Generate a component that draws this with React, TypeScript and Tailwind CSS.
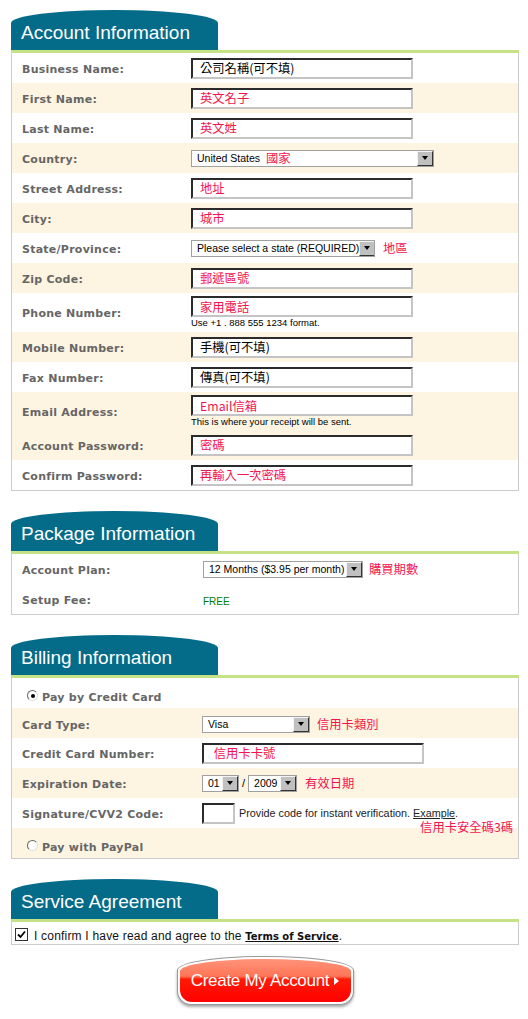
import React from 'react';

const RED = 'text-[#f5134f]';

function Section({ title, children, last }: { title: string; children: React.ReactNode; last?: boolean }) {
  return (
    <section className={last ? 'mb-[11px]' : 'mb-[20px]'}>
      <div className="w-[207px] h-[40px] bg-[#046b89] rounded-t-[50%_13px] pl-[10px] pt-[13px] text-white text-[19px] leading-[19px] font-['Liberation_Sans',Arial,sans-serif]">
        {title}
      </div>
      <div className="h-[3px] bg-[#c5e386]" />
      <div className="border-x border-b border-[#cccccc]">{children}</div>
    </section>
  );
}

function Row({
  label,
  cream,
  labelW = 'w-[179px]',
  children,
  className = '',
}: {
  label: React.ReactNode;
  cream?: boolean;
  labelW?: string;
  children?: React.ReactNode;
  className?: string;
}) {
  return (
    <div className={`flex items-center min-h-[30px] ${cream ? 'bg-[#fdf5e2]' : 'bg-white'} ${className}`}>
      <div className={`${labelW} shrink-0 pl-[10px] pt-[4px] text-[11px] font-bold tracking-[0.25px] text-[#666666] font-['DejaVu_Sans',Verdana,sans-serif]`}>
        {label}
      </div>
      <div className="flex-1 flex items-center">{children}</div>
    </div>
  );
}

function Field({ value, black, w = 'w-[222px]' }: { value: string; black?: boolean; w?: string }) {
  return (
    <input
      readOnly
      value={value}
      className={`block ${w} h-[21px] border-2 border-t-[#2b2b2b] border-l-[#2b2b2b] border-r-[#c4c4c4] border-b-[#c4c4c4] bg-white pl-[7px] text-[12.3px] outline-none font-['Noto_Sans_CJK_TC',sans-serif] ${black ? 'text-black' : RED}`}
    />
  );
}

function Select({ w, text, children }: { w: string; text: string; children?: React.ReactNode }) {
  return (
    <div className={`${w} h-[17px] border border-[#a0a0a0] bg-white flex items-center overflow-hidden`}>
      <span className="pl-[5px] text-[10.5px] leading-[15px] text-black whitespace-nowrap font-['Liberation_Sans',Arial,sans-serif]">
        {text}
      </span>
      {children}
      <span className="ml-auto shrink-0 w-[16px] h-[15px] border border-t-[#f4f4f4] border-l-[#f4f4f4] border-r-[#333333] border-b-[#333333] bg-[#c0c0c0] flex items-center justify-center">
        <span className="w-0 h-0 border-x-[3px] border-x-transparent border-t-[4px] border-t-black" />
      </span>
    </div>
  );
}

function Note({ children, className = '' }: { children: React.ReactNode; className?: string }) {
  return (
    <span className={`text-[12.3px] leading-[15px] whitespace-nowrap font-['Noto_Sans_CJK_TC',sans-serif] ${RED} ${className}`}>
      {children}
    </span>
  );
}

function Radio({ checked }: { checked?: boolean }) {
  return (
    <span className="mb-[6px] w-[11px] h-[11px] rounded-full border border-t-[#666666] border-l-[#666666] border-r-[#e0e0e0] border-b-[#e0e0e0] bg-white flex items-center justify-center shrink-0">
      {checked && <span className="w-[4px] h-[4px] rounded-full bg-black" />}
    </span>
  );
}

function RadioRow({ label, checked, cream }: { label: string; checked?: boolean; cream?: boolean }) {
  return (
    <div className={`flex items-center h-[30px] pl-[15px] pt-[11px] ${cream ? 'bg-[#fdf5e2]' : 'bg-white'}`}>
      <Radio checked={checked} />
      <span className="ml-[4px] text-[11px] font-bold tracking-[0.25px] text-[#666666] font-['DejaVu_Sans',Verdana,sans-serif]">
        {label}
      </span>
    </div>
  );
}

export default function App() {
  return (
    <div className="w-[528px] bg-white pt-[10px] pl-[11px] pr-[9px] pb-[13px]">
      <Section title="Account Information">
        <Row label="Business Name:">
          <Field value="公司名稱(可不填)" black />
        </Row>
        <Row label="First Name:" cream>
          <Field value="英文名子" />
        </Row>
        <Row label="Last Name:">
          <Field value="英文姓" />
        </Row>
        <Row label="Country:" cream>
          <Select w="w-[243px]" text="United States">
            <Note className="ml-[6px]">國家</Note>
          </Select>
        </Row>
        <Row label="Street Address:">
          <Field value="地址" />
        </Row>
        <Row label="City:" cream>
          <Field value="城市" />
        </Row>
        <Row label="State/Province:">
          <Select w="w-[184px]" text="Please select a state (REQUIRED)" />
          <Note className="ml-[8px]">地區</Note>
        </Row>
        <Row label="Zip Code:" cream>
          <Field value="郵遞區號" />
        </Row>
        <Row label="Phone Number:">
          <div className="pt-[3px] pb-[4px]">
            <Field value="家用電話" />
            <div className="text-[9.5px] leading-[11px] text-black font-['Liberation_Sans',Arial,sans-serif]">
              Use +1 . 888 555 1234 format.
            </div>
          </div>
        </Row>
        <Row label="Mobile Number:" cream>
          <Field value="手機(可不填)" black />
        </Row>
        <Row label="Fax Number:">
          <Field value="傳真(可不填)" black />
        </Row>
        <Row label="Email Address:" cream>
          <div className="pt-[3px] pb-[3px]">
            <Field value="Email信箱" />
            <div className="text-[9.5px] leading-[11px] text-black font-['Liberation_Sans',Arial,sans-serif]">
              This is where your receipt will be sent.
            </div>
          </div>
        </Row>
        <Row label="Account Password:" cream>
          <Field value="密碼" />
        </Row>
        <Row label="Confirm Password:">
          <Field value="再輸入一次密碼" />
        </Row>
      </Section>

      <Section title="Package Information">
        <Row label="Account Plan:" labelW="w-[191px]">
          <Select w="w-[160px]" text="12 Months ($3.95 per month)" />
          <Note className="ml-[6px]">購買期數</Note>
        </Row>
        <Row label="Setup Fee:" labelW="w-[191px]">
          <span className="pt-[4px] text-[10px] text-[#008000] font-['Liberation_Sans',Arial,sans-serif]">FREE</span>
        </Row>
      </Section>

      <Section title="Billing Information">
        <RadioRow label="Pay by Credit Card" checked />
        <Row label="Card Type:" cream labelW="w-[190px]" className="pt-[2px]">
          <Select w="w-[108px]" text="Visa" />
          <Note className="ml-[7px]">信用卡類別</Note>
        </Row>
        <Row label="Credit Card Number:" labelW="w-[190px]">
          <Field value=" 信用卡卡號" />
        </Row>
        <Row label="Expiration Date:" cream labelW="w-[190px]">
          <Select w="w-[37px]" text="01" />
          <span className="mx-[3px] text-[11px] text-black font-['Liberation_Sans',Arial,sans-serif]">/</span>
          <Select w="w-[49px]" text="2009" />
          <Note className="ml-[8px]">有效日期</Note>
        </Row>
        <Row label="Signature/CVV2 Code:" labelW="w-[190px]" className="relative">
          <span className="w-[33px] h-[21px] border-2 border-t-[#2b2b2b] border-l-[#2b2b2b] border-r-[#c4c4c4] border-b-[#c4c4c4] bg-white" />
          <span className="ml-[4px] text-[10.8px] text-[#222222] whitespace-nowrap font-['Liberation_Sans',Arial,sans-serif]">
            Provide code for instant verification. <span className="underline">Example</span>.
          </span>
          <Note className="absolute right-[5px] top-[22px]">信用卡安全碼3碼</Note>
        </Row>
        <RadioRow label="Pay with PayPal" cream />
      </Section>

      <Section title="Service Agreement" last>
        <div className="flex items-center h-[22px] pt-[4px] pl-[3px] bg-white">
          <span className="mb-[1px] w-[13px] h-[13px] border border-[#333333] bg-white flex items-center justify-center shrink-0">
            <svg width="9" height="9" viewBox="0 0 9 9">
              <path d="M1 4.5 L3.5 7 L8 1.5" fill="none" stroke="#000" strokeWidth="1.8" />
            </svg>
          </span>
          <span className="ml-[6px] pt-[2px] text-[12px] tracking-[0.2px] text-[#111111] whitespace-nowrap font-['Liberation_Sans',Arial,sans-serif]">
            I confirm I have read and agree to the{' '}
            <a className="underline font-bold text-[10px] tracking-normal text-[#111111] font-['DejaVu_Sans',Verdana,sans-serif]">
              Terms of Service
            </a>
            .
          </span>
        </div>
      </Section>

      <div className="flex justify-center">
        <button className="w-[177px] h-[49px] p-[2px] bg-white border border-[#9a9a9a] rounded-t-[50%_14px] rounded-b-[14px] shadow-[0_2px_3px_rgba(0,0,0,0.35)]">
          <span className="w-full h-full flex items-center justify-center rounded-t-[50%_12px] rounded-b-[12px] bg-[linear-gradient(to_bottom,#ff937a_0%,#ff7658_40%,#ff1a05_47%,#ff0000_100%)] text-white text-[17px] tracking-[-0.3px] font-['Liberation_Sans',Arial,sans-serif]">
            Create My Account
            <span className="ml-[5px] w-0 h-0 border-y-[4px] border-y-transparent border-l-[5px] border-l-white" />
          </span>
        </button>
      </div>
    </div>
  );
}
